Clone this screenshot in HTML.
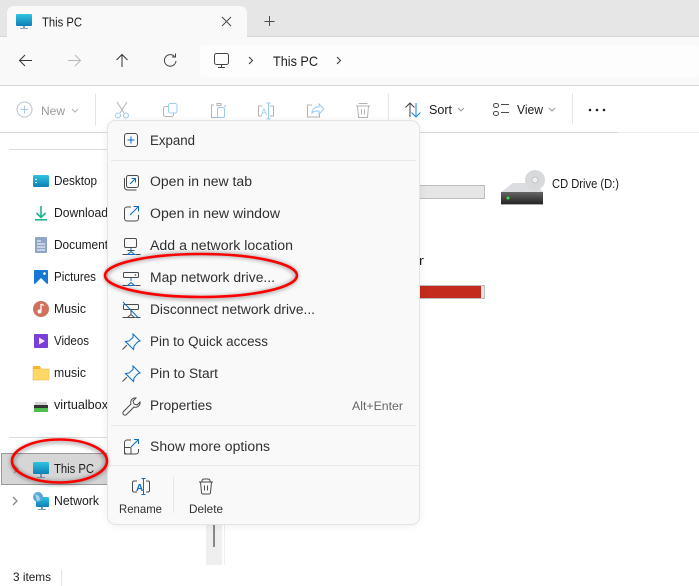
<!DOCTYPE html>
<html><head><meta charset="utf-8"><style>
html,body{margin:0;padding:0;background:#fff;overflow:hidden}
svg{display:block;font-family:"Liberation Sans",sans-serif;font-size:13px}
text{fill:#1c1c1c}
text.m{fill:#303030}
.g{fill:none;stroke:#4a4a4a;stroke-width:1}
.b{fill:none;stroke:#0a6cc4;stroke-width:1}
.l{fill:none;stroke:#b4b4b4;stroke-width:1}
.lb{fill:none;stroke:#9ccbf0;stroke-width:1}
</style></head><body>
<svg width="699" height="586" viewBox="0 0 699 586" xmlns="http://www.w3.org/2000/svg">
<defs>
<linearGradient id="mon" x1="0" y1="0" x2="0" y2="1"><stop offset="0" stop-color="#2fc4e0"/><stop offset="1" stop-color="#0f7fb5"/></linearGradient>
<linearGradient id="dr" x1="0" y1="0" x2="0" y2="1"><stop offset="0" stop-color="#666"/><stop offset="1" stop-color="#222"/></linearGradient>
<filter id="sh" x="-20%" y="-20%" width="140%" height="140%"><feGaussianBlur stdDeviation="5"/></filter>
<filter id="ms" x="-10%" y="-10%" width="120%" height="120%"><feGaussianBlur stdDeviation="1.500"/></filter>
</defs>
<!-- title bar -->
<rect width="699" height="37" fill="#e6e6e6"/>
<rect y="36" width="699" height="1" fill="#d6d6d6"/>
<path d="M7 37V13a7 7 0 0 1 7-7h226a7 7 0 0 1 7 7v24z" fill="#f9f9f9"/>
<rect x="16" y="14" width="16" height="12" rx="1" fill="url(#mon)"/><rect x="23" y="26" width="2" height="2" fill="#7aa"/><rect x="20" y="28" width="8" height="1" fill="#9ab"/>
<text x="42" y="26.500" textLength="40" lengthAdjust="spacingAndGlyphs" font-size="12.500">This PC</text>
<path class="g" d="M222 17l9 9M231 17l-9 9"/>
<path class="g" d="M269.500 16v10M264.500 21.500h10"/>
<!-- nav -->
<rect y="37" width="699" height="48" fill="#f9f9f9"/>
<rect y="85" width="699" height="1" fill="#d5d5d5"/>
<path d="M32 60.500H20M25 55l-5.500 5.500L25 66" fill="none" stroke="#333" stroke-width="1"/>
<path d="M80 60.500H68M75 55l5.500 5.500L75 66" fill="none" stroke="#b8b8b8" stroke-width="1"/>
<path d="M122 67V55M116.500 60l5.500-5.500 5.500 5.500" fill="none" stroke="#333" stroke-width="1"/>
<path d="M174.500 56.500A5.800 5.800 0 1 0 176 61M175.500 53.500v3.500h-3.500" fill="none" stroke="#444" stroke-width="1"/>
<rect x="200" y="45" width="499" height="32" rx="4" fill="#fdfdfd"/>
<rect x="214.500" y="53.500" width="14" height="11" rx="2" fill="none" stroke="#444" stroke-width="1"/><path d="M218 67.500h7M221.500 65v2" stroke="#444" fill="none"/>
<path d="M249 57l3.500 3.500L249 64" fill="none" stroke="#333" stroke-width="1"/>
<text x="273" y="66" textLength="45" lengthAdjust="spacingAndGlyphs" font-size="14">This PC</text>
<path d="M337 57l3.500 3.500L337 64" fill="none" stroke="#333" stroke-width="1"/>
<!-- command bar -->
<rect y="86" width="699" height="46" fill="#fff"/>
<rect y="132" width="618" height="1" fill="#d8d8d8"/><rect x="618" y="132" width="81" height="1" fill="#eee"/>
<circle cx="24.500" cy="109.500" r="7.500" fill="none" stroke="#b8c4cc"/><path d="M24.500 105.500v8M20.500 109.500h8" stroke="#a8c8e4" fill="none"/>
<text x="41" y="115" textLength="24" lengthAdjust="spacingAndGlyphs" font-size="12" style="fill:#9a9a9a">New</text>
<path d="M72 109l3 3 3-3" fill="none" stroke="#b0b0b0"/>
<rect x="95" y="94" width="1" height="32" fill="#e6e6e6"/>
<path d="M117 102l7 11M127 102l-7 11" class="l"/><circle cx="118" cy="115.500" r="2.500" class="lb"/><circle cx="126" cy="115.500" r="2.500" class="lb"/>
<rect x="163.500" y="106.500" width="10" height="10" rx="2" class="l"/><rect x="168.500" y="103.500" width="8.500" height="9.500" rx="2" fill="#fff" stroke="#9ccbf0"/>
<path class="l" d="M214 105h-2.500v12.500H218M217 103.500h4v2h-4zM225 105v2"/><rect x="217.500" y="107.500" width="7" height="10" rx="1.500" class="lb"/>
<path class="l" d="M262 106h-3.500v10h3.500M270 106h3.500v10H270"/><text x="261" y="115" font-size="9" style="fill:#9ccbf0">A</text><path class="lb" d="M268.500 103v16M266.500 103h4M266.500 119h4"/>
<path class="l" d="M312 105h-4.500v12h12v-4"/><path class="lb" d="M312 113c0-4 3-6 7-6v-3l5 5-5 5v-3c-3 0-5 0-7 2z"/>
<path class="l" d="M356 106h14M358.500 103.500h9M357.500 106l1 11.500h9l1-11.500M361.500 109v5.500M364.500 109v5.500"/>
<rect x="388" y="94" width="1" height="32" fill="#e6e6e6"/>
<path d="M410 117V103M405.500 107.500l4.500-4.500 4.500 4.500" fill="none" stroke="#444"/><path d="M416 103v14M411.500 112.500l4.500 4.500 4.500-4.500" fill="none" stroke="#1a86e0"/>
<text x="429" y="114" textLength="23" lengthAdjust="spacingAndGlyphs" font-size="12.500">Sort</text>
<path d="M458 108l3 3 3-3" fill="none" stroke="#999"/>
<rect x="493.500" y="103.500" width="5" height="4" rx="2" class="g"/><rect x="493.500" y="111.500" width="5" height="4" rx="2" class="g"/><path class="g" d="M501 104.500h8M501 112.500h8"/>
<text x="517" y="114" textLength="26" lengthAdjust="spacingAndGlyphs" font-size="12.500">View</text>
<path d="M549 108l3 3 3-3" fill="none" stroke="#999"/>
<rect x="572" y="93" width="1" height="31" fill="#e6e6e6"/>
<circle cx="590" cy="110" r="1.300" fill="#222"/><circle cx="597" cy="110" r="1.300" fill="#222"/><circle cx="604" cy="110" r="1.300" fill="#222"/>
<!-- sidebar -->
<rect x="9" y="149" width="99" height="1" fill="#dcdcdc"/><rect x="9" y="437" width="99" height="1" fill="#dcdcdc"/>
<rect x="33" y="175" width="16" height="12" rx="1.500" fill="url(#mon)"/><rect x="35" y="179" width="2" height="1" fill="#fff"/><rect x="35" y="182" width="2" height="1" fill="#fff"/>
<path d="M41 206v11M36.500 213l4.500 4.500 4.500-4.500" fill="none" stroke="#1fb38f" stroke-width="1.600"/><rect x="35" y="219" width="12" height="1.600" fill="#1fb38f"/>
<rect x="35" y="237" width="12" height="16" rx="1" fill="#8fa6c6"/><path d="M37 241h4M37 244h8M37 247h8M37 250h8" stroke="#fff" fill="none"/>
<rect x="34" y="270" width="14" height="14" rx="1" fill="#1678d2"/><path d="M35 284l6-6 6 6z" fill="#fff"/><circle cx="44.500" cy="273.500" r="1.300" fill="#fff"/>
<circle cx="41" cy="309" r="8" fill="#d0705f"/><path d="M41 304v7" stroke="#fff" stroke-width="1.300"/><circle cx="39.500" cy="311.500" r="2" fill="#fff"/><path d="M41 304l3 1.500" stroke="#fff"/>
<rect x="34" y="334" width="14" height="14" rx="1" fill="#7a3fd4"/><path d="M39 337.500l6 3.500-6 3.500z" fill="#f2e9ff"/>
<path d="M33 367h7l2 2h7v11H33z" fill="#ffd867" stroke="#e3b23a" stroke-width=".5"/><rect x="33" y="366" width="7" height="3" fill="#f5b731"/>
<rect x="35" y="402" width="12" height="3" fill="#d4d4d4"/><rect x="34" y="405" width="14" height="3" fill="#333"/><rect x="34" y="408" width="14" height="4" fill="#4cc04c"/>
<g font-size="12.500">
<text x="54" y="185" textLength="43" lengthAdjust="spacingAndGlyphs">Desktop</text>
<text x="54" y="217" textLength="54" lengthAdjust="spacingAndGlyphs">Download</text>
<text x="54" y="249" textLength="54" lengthAdjust="spacingAndGlyphs">Document</text>
<text x="54" y="281" textLength="42" lengthAdjust="spacingAndGlyphs">Pictures</text>
<text x="54" y="313" textLength="32" lengthAdjust="spacingAndGlyphs">Music</text>
<text x="54" y="345" textLength="35" lengthAdjust="spacingAndGlyphs">Videos</text>
<text x="54" y="377" textLength="32" lengthAdjust="spacingAndGlyphs">music</text>
<text x="54" y="409" textLength="54" lengthAdjust="spacingAndGlyphs">virtualbox</text>
</g>
<rect x="1.500" y="453.500" width="108" height="31" fill="#d6d6d6" stroke="#9a9a9a"/>
<path d="M14 465l4 4-4 4" fill="none" stroke="#999" stroke-width="1.300"/>
<rect x="33" y="462" width="16" height="12" rx="1" fill="url(#mon)"/><rect x="40" y="474" width="2" height="3" fill="#6a9ab0"/><rect x="37" y="477" width="8" height="1" fill="#7a9ab0"/>
<text x="54" y="473" textLength="40" lengthAdjust="spacingAndGlyphs" font-size="12.500">This PC</text>
<path d="M13 497l4 4-4 4" fill="none" stroke="#888" stroke-width="1.300"/>
<rect x="36" y="497" width="13" height="10" rx="1" fill="url(#mon)"/><rect x="41" y="507" width="2" height="2" fill="#6a9ab0"/><rect x="38" y="509" width="8" height="1" fill="#7a9ab0"/><circle cx="38" cy="497" r="5" fill="#5aa6d8"/><path d="M35 494l4 2 1 4-3 1z" fill="#a9d4ee"/>
<text x="54" y="505" textLength="45" lengthAdjust="spacingAndGlyphs" font-size="12.500">Network</text>
<!-- content -->
<rect x="400" y="185.500" width="84.500" height="13" fill="#e6e6e6" stroke="#bcbcbc"/>
<text x="410" y="265" font-size="12.500" textLength="14" lengthAdjust="spacingAndGlyphs">er</text>
<rect x="400" y="285.500" width="84.500" height="13" fill="#e6e6e6" stroke="#bcbcbc"/><rect x="400" y="286" width="81" height="12" fill="#c42b1c"/>
<path d="M501 192l12-9h22l8 9z" fill="#dcdde0"/><rect x="501" y="192" width="42" height="12.500" fill="url(#dr)"/><rect x="501" y="204" width="42" height="1" fill="#aaa"/><circle cx="508" cy="198" r="1.500" fill="#3fdc3f"/>
<circle cx="535" cy="180" r="10" fill="#d8d9db"/><circle cx="535" cy="180" r="3" fill="#f1f1f1" stroke="#c4c4c4"/>
<text x="552" y="188" textLength="67" lengthAdjust="spacingAndGlyphs" font-size="12.500">CD Drive (D:)</text>
<!-- scrollbar -->
<rect x="206" y="500" width="16" height="65" fill="#efefef"/><rect x="213" y="500" width="2" height="47" fill="#888"/><rect x="224" y="500" width="1" height="65" fill="#eee"/>
<!-- status -->
<text x="13" y="581" textLength="38" lengthAdjust="spacingAndGlyphs" font-size="12">3 items</text>
<rect x="61" y="570" width="1" height="16" fill="#e4e4e4"/>
<!-- menu -->
<rect x="108" y="122" width="311" height="403" rx="8" fill="#000" opacity=".08" filter="url(#sh)"/>
<rect x="107.500" y="120.500" width="312" height="404" rx="8" fill="#f9f9f9" stroke="#e4e4e4"/>
<rect x="111" y="160" width="305" height="1" fill="#e9e9e9"/><rect x="111" y="425" width="305" height="1" fill="#e9e9e9"/><rect x="108" y="465" width="311" height="1" fill="#e9e9e9"/>
<g font-size="13.500">
<text class="m" x="150" y="145" textLength="45" lengthAdjust="spacingAndGlyphs">Expand</text>
<text class="m" x="150" y="186" textLength="102" lengthAdjust="spacingAndGlyphs">Open in new tab</text>
<text class="m" x="150" y="218" textLength="130" lengthAdjust="spacingAndGlyphs">Open in new window</text>
<text class="m" x="150" y="250" textLength="143" lengthAdjust="spacingAndGlyphs">Add a network location</text>
<text class="m" x="150" y="282" textLength="125" lengthAdjust="spacingAndGlyphs">Map network drive...</text>
<text class="m" x="150" y="314" textLength="165" lengthAdjust="spacingAndGlyphs">Disconnect network drive...</text>
<text class="m" x="150" y="346" textLength="118" lengthAdjust="spacingAndGlyphs">Pin to Quick access</text>
<text class="m" x="150" y="378" textLength="68" lengthAdjust="spacingAndGlyphs">Pin to Start</text>
<text class="m" x="150" y="410" textLength="62" lengthAdjust="spacingAndGlyphs">Properties</text>
<text class="m" x="150" y="451" textLength="120" lengthAdjust="spacingAndGlyphs">Show more options</text>
</g>
<text x="352" y="410" textLength="51" lengthAdjust="spacingAndGlyphs" font-size="11.500" style="fill:#666">Alt+Enter</text>
<text class="m" x="119" y="513" textLength="43" lengthAdjust="spacingAndGlyphs" font-size="12">Rename</text>
<text class="m" x="189" y="513" textLength="34" lengthAdjust="spacingAndGlyphs" font-size="12">Delete</text>
<rect x="173" y="477" width="1" height="36" fill="#e6e6e6"/>
<!-- menu icons -->
<rect x="124.500" y="133.500" width="13" height="13" rx="2.500" class="g"/><path class="b" d="M131 136.500v7M127.500 140h7"/>
<rect x="126.500" y="175.500" width="12" height="12" rx="2" class="g"/><path class="g" d="M124.500 178v9a3 3 0 0 0 3 3h9"/><path class="b" d="M130 184l5-5M131.500 178.500h4v4"/>
<path class="g" d="M131 207h-4a2.500 2.500 0 0 0-2.500 2.500v9a2.500 2.500 0 0 0 2.500 2.500h9a2.500 2.500 0 0 0 2.500-2.500V215"/><path class="b" d="M130 215l8.500-8.500M133.500 206.500h5v5"/>
<rect x="124.500" y="238.500" width="12" height="9" rx="1.500" class="g"/><path class="g" d="M127.500 250.500h7M122.500 254.500h5M135.500 254.500h5"/><path class="b" d="M131 248v3M127.500 254.500l3.500-3 3.500 3z"/>
<rect x="123.500" y="272.500" width="15" height="5" rx="1" class="g"/><path class="g" d="M122.500 285.500h5M135.500 285.500h5"/><circle cx="135.500" cy="275" r=".8" fill="#4a4a4a"/><path class="b" d="M131 278v3M127.500 285.500l3.500-3 3.500 3z"/>
<rect x="123.500" y="304.500" width="15" height="5" rx="1" class="g"/><path class="g" d="M122.500 317.500h5M135.500 317.500h5M131 310v4M127.500 317.500l3.500-3 3.500 3z"/><path class="b" d="M123 302l15.500 16"/>
<path class="b" d="M133 334l7 7-2.500 1-3.500 4-.5 3.500-8-8 3.500-.5 4-3.500z"/><path class="g" d="M127 345l-4.500 4.500"/>
<path class="b" d="M133 366l7 7-2.500 1-3.500 4-.5 3.500-8-8 3.500-.5 4-3.500z"/><path class="g" d="M127 377l-4.500 4.500"/>
<path class="g" d="M136 398a4.500 4.500 0 0 0-5 6l-7.500 7.500a2 2 0 0 0 3 3l7.500-7.500a4.500 4.500 0 0 0 6-5l-3 3-3-1-1-3z"/>
<path class="g" d="M131 440h-4a2.500 2.500 0 0 0-2.500 2.500v9a2.500 2.500 0 0 0 2.500 2.500h9a2.500 2.500 0 0 0 2.500-2.500V449"/><rect x="124.500" y="447.500" width="6.500" height="6.500" class="g" rx="1"/><path class="b" d="M131 447l7.500-7.500M134 439.500h4.500v4.500"/>
<path class="g" d="M137 481h-3a1.500 1.500 0 0 0-1.500 1.500v8a1.500 1.500 0 0 0 1.500 1.500h3M146 481h2a1.500 1.500 0 0 1 1.500 1.500v8a1.500 1.500 0 0 1-1.500 1.500h-2"/>
<text x="136" y="491" font-size="10" font-weight="bold" style="fill:#0a6cc4">A</text><path class="b" d="M143.500 479v15M141.500 478.500h4M141.500 494.500h4"/>
<path class="g" d="M199 482h14M202 482v-1.500a2 2 0 0 1 2-1.500h4a2 2 0 0 1 2 1.500V482M200.500 482l1 10.500a1.500 1.500 0 0 0 1.500 1.500h6a1.500 1.500 0 0 0 1.500-1.500l1-10.500M204.500 485.500v5M207.500 485.500v5"/>
<!-- red ellipses -->
<g fill="none">
<ellipse cx="201" cy="276" rx="95" ry="22" stroke="#000" stroke-opacity=".22" stroke-width="6" filter="url(#ms)"/>
<ellipse cx="59.500" cy="462" rx="47" ry="21" stroke="#000" stroke-opacity=".22" stroke-width="6" filter="url(#ms)"/>
<ellipse cx="201" cy="275.500" rx="96" ry="21.500" stroke="#f00" stroke-width="2.600"/>
<ellipse cx="59.500" cy="461" rx="47.500" ry="21.500" stroke="#f00" stroke-width="2.600"/>
</g>
</svg>
</body></html>
